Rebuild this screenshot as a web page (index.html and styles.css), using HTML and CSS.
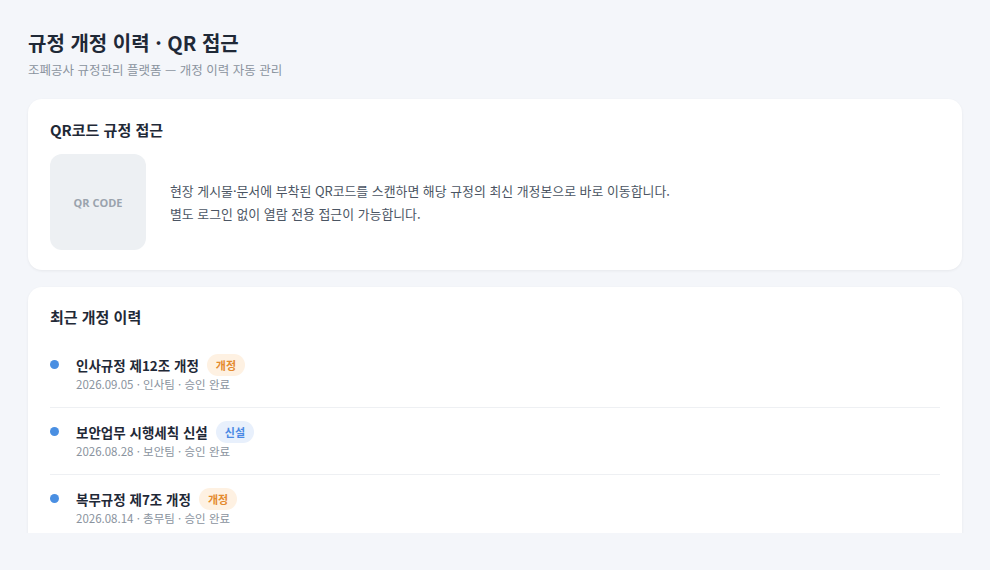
FILE: index.html
```html
<!DOCTYPE html>
<html lang="ko">
<head>
    <meta charset="UTF-8">
    <meta name="viewport" content="width=device-width, initial-scale=1.0">
    <title>규정 개정 이력 · QR 접근</title>
    <link rel="stylesheet" href="styles.css">
</head>
<body>

    <div class="page">
        <!-- Header -->
        <div class="header">
            <h1 class="title">규정 개정 이력 · QR 접근</h1>
            <p class="subtitle">조폐공사 규정관리 플랫폼 — 개정 이력 자동 관리</p>
        </div>

        <!-- QR access card -->
        <div class="card card-qr">
            <h2 class="card-title">QR코드 규정 접근</h2>
            <div class="qr-row">
                <div class="qr-box">QR CODE</div>
                <p class="qr-desc">
                    현장 게시물·문서에 부착된 QR코드를 스캔하면 해당 규정의 최신 개정본으로 바로 이동합니다.<br>
                    별도 로그인 없이 열람 전용 접근이 가능합니다.
                </p>
            </div>
        </div>

        <!-- Recent history card -->
        <div class="card">
            <h2 class="card-title">최근 개정 이력</h2>
            <ul class="history">
                <li class="history-item">
                    <span class="dot"></span>
                    <div class="item-body">
                        <div class="item-title">인사규정 제12조 개정 <span class="badge badge-revise">개정</span></div>
                        <div class="item-meta">2026.09.05 · 인사팀 · 승인 완료</div>
                    </div>
                </li>
                <li class="history-item">
                    <span class="dot"></span>
                    <div class="item-body">
                        <div class="item-title">보안업무 시행세칙 신설 <span class="badge badge-new">신설</span></div>
                        <div class="item-meta">2026.08.28 · 보안팀 · 승인 완료</div>
                    </div>
                </li>
                <li class="history-item">
                    <span class="dot"></span>
                    <div class="item-body">
                        <div class="item-title">복무규정 제7조 개정 <span class="badge badge-revise">개정</span></div>
                        <div class="item-meta">2026.08.14 · 총무팀 · 승인 완료</div>
                    </div>
                </li>
            </ul>
        </div>
    </div>

</body>
</html>
```

FILE: styles.css
```css
body {
    font-family: "Noto Sans CJK KR", "Noto Sans", sans-serif;
    background-color: #f4f6fa;
    color: #1f2937;
    margin: 0;
}

/* Page wraps everything; bottom is cut off like the screenshot */
.page {
    height: 533px;
    overflow: hidden;
    padding: 29px 28px 0;
    box-sizing: border-box;
}

/* Header */
.header {
    margin-bottom: 20px;
}

.title {
    font-size: 20px;
    line-height: 28px;
    font-weight: bold;
    color: #1f2937;
    margin: 0;
}

.subtitle {
    font-size: 12.5px;
    line-height: 18px;
    color: #8a939e;
    margin: 4px 0 0;
}

/* Cards */
.card {
    background-color: #fff;
    border-radius: 14px;
    box-shadow: 0 1px 3px rgba(0, 0, 0, 0.06);
    padding: 20px 22px 20px;
    margin-bottom: 17px;
}

.card-qr {
    padding-top: 21px;
}

.card-title {
    font-size: 15px;
    line-height: 20px;
    font-weight: bold;
    color: #1f2937;
    margin: 0 0 14px;
}

/* QR row */
.qr-row {
    display: flex;
    align-items: center;
}

.qr-box {
    width: 96px;
    height: 96px;
    border-radius: 12px;
    background-color: #edf0f3;
    color: #9aa3ad;
    font-family: "Open Sans", "Noto Sans", sans-serif;
    font-size: 11px;
    font-weight: bold;
    display: flex;
    align-items: center;
    justify-content: center;
    flex-shrink: 0;
}

.qr-desc {
    margin: 0 0 0 24px;
    font-size: 12.9px;
    line-height: 23px;
    color: #4b5563;
}

/* History list */
.history {
    list-style: none;
    margin: 0;
    padding: 0;
}

.history-item {
    display: flex;
    align-items: flex-start;
    padding: 14px 0 13px;
    border-bottom: 1px solid #eef0f3;
}

.history-item:last-child {
    border-bottom: none;
}

.dot {
    width: 9px;
    height: 9px;
    border-radius: 50%;
    background-color: #4a8fe2;
    margin: 5px 17px 0 0;
    flex-shrink: 0;
}

.item-title {
    font-size: 13.5px;
    height: 20px;
    line-height: 20px;
    font-weight: bold;
    color: #1f2937;
    display: flex;
    align-items: center;
}

.item-meta {
    font-size: 11.5px;
    line-height: 19px;
    color: #8a939e;
}

.badge {
    display: inline-block;
    font-size: 11px;
    line-height: 22px;
    font-weight: bold;
    padding: 0 9px;
    border-radius: 11px;
    margin-left: 8px;
}

.badge-revise {
    background-color: #fef1e2;
    color: #e48a2e;
}

.badge-new {
    background-color: #e8f0fc;
    color: #4a89e4;
}
```
